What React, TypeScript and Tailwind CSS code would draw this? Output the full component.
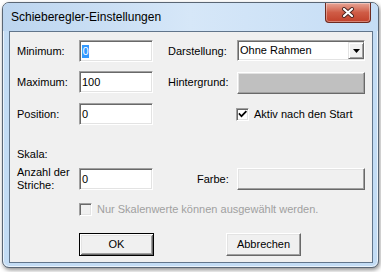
import React from "react";

const sunken =
  "border border-t-[#a0a0a0] border-l-[#a0a0a0] border-r-white border-b-white shadow-[inset_1px_1px_0_#696969,inset_-1px_-1px_0_#e3e3e3]";
const raised =
  "border border-t-white border-l-white border-r-[#696969] border-b-[#696969] shadow-[inset_-1px_-1px_0_#a0a0a0,inset_1px_1px_0_#e3e3e3]";

function Label({ children, w }: { children: React.ReactNode; w: string }) {
  return <div className={`${w} shrink-0 leading-[13px]`}>{children}</div>;
}

function Input({ children }: { children?: React.ReactNode }) {
  return (
    <div className={`w-[74px] h-[22px] shrink-0 bg-white ${sunken} flex items-center pl-[2px] leading-[13px]`}>
      {children}
    </div>
  );
}

function Check({ checked, disabled }: { checked?: boolean; disabled?: boolean }) {
  return (
    <div
      className={`w-[13px] h-[13px] shrink-0 ${sunken} ${disabled ? "bg-[#f0f0f0]" : "bg-white"} flex items-center justify-center`}
    >
      {checked && (
        <svg width="9" height="9" viewBox="0 0 9 9">
          <path d="M1.5 4 L3.5 6.2 L7.8 1.8" stroke="#000" strokeWidth="1.7" fill="none" strokeLinecap="square" />
        </svg>
      )}
    </div>
  );
}

export default function App() {
  return (
    <div className="w-[381px] h-[272px] bg-white pl-[2px] pt-[2px] overflow-hidden">
      <div className="relative w-[377px] h-[266px] rounded-[7px] border border-[#5a6674] bg-[#c3dcf4] shadow-[1px_2px_4px_rgba(0,0,0,0.45),inset_0_0_0_1px_rgba(255,255,255,0.65)] flex flex-col">
        {/* title bar */}
        <div className="h-[28px] shrink-0 rounded-t-[6px] bg-gradient-to-r from-[#bcd5ef] via-[#d6e7f8] to-[#c5ddf5] pl-[8px] pt-[6px]">
          <div
            className="text-[12px] leading-[16px] text-black"
            style={{ fontFamily: '"Liberation Sans", Arial, sans-serif' }}
          >
            Schieberegler-Einstellungen
          </div>
        </div>
        {/* close button */}
        <div className="absolute left-[322px] top-0 w-[46px] h-[20px] rounded-b-[4px] border border-t-0 border-[#6e2a1f] bg-gradient-to-b from-[#e7a596] via-[#cf5c46] to-[#c1402a] shadow-[inset_0_0_0_1px_rgba(255,255,255,0.35)] flex items-center justify-center">
          <svg width="14" height="11" viewBox="0 0 14 11">
            <path d="M3 2 L11 9 M11 2 L3 9" stroke="#4a2520" strokeWidth="4" strokeLinecap="round" fill="none" />
            <path d="M3 2 L11 9 M11 2 L3 9" stroke="#ffffff" strokeWidth="2.2" strokeLinecap="round" fill="none" />
          </svg>
        </div>

        {/* client area */}
        <div
          className="ml-[6px] w-[364px] h-[232px] border border-[#61758b] bg-[#f0f0f0] pl-[7px] pt-[8px] text-[11px] text-black flex flex-col"
          style={{ fontFamily: '"Liberation Sans", Arial, sans-serif' }}
        >
          {/* row 1 */}
          <div className="flex items-center h-[22px]">
            <Label w="w-[62px]">Minimum:</Label>
            <Input>
              <span className="inline-block h-[13px] leading-[13px] px-[0.5px] bg-[#3399ff] text-white">0</span>
            </Input>
            <div className="w-[15px] shrink-0" />
            <Label w="w-[69px]">Darstellung:</Label>
            <div className={`w-[128px] h-[21px] self-start bg-white ${sunken} flex items-center`}>
              <div className="flex-1 pl-[2px] leading-[13px]">Ohne Rahmen</div>
              <div className="w-[16px] h-[17px] bg-[#f0f0f0] border border-t-[#e3e3e3] border-l-[#e3e3e3] border-r-[#696969] border-b-[#696969] shadow-[inset_1px_1px_0_#fff,inset_-1px_-1px_0_#a0a0a0] flex items-center justify-center">
                <svg width="7" height="4" viewBox="0 0 7 4">
                  <path d="M0 0 H7 L3.5 4 Z" fill="#000" />
                </svg>
              </div>
            </div>
          </div>

          {/* row 2 */}
          <div className="flex items-center h-[22px] mt-[9px]">
            <Label w="w-[62px]">Maximum:</Label>
            <Input>100</Input>
            <div className="w-[15px] shrink-0" />
            <Label w="w-[69px]">Hintergrund:</Label>
            <div className={`w-[128px] h-[22px] self-start mt-[1px] bg-[#c0c0c0] ${raised}`} />
          </div>

          {/* row 3 */}
          <div className="flex items-center h-[22px] mt-[10px]">
            <Label w="w-[62px]">Position:</Label>
            <Input>0</Input>
            <div className="w-[15px] shrink-0" />
            <div className="w-[68px] shrink-0" />
            <Check checked />
            <div className="ml-[5px] leading-[13px]">Aktiv nach den Start</div>
          </div>

          {/* Skala */}
          <div className="mt-[23px] leading-[13px]">Skala:</div>

          {/* row 5 */}
          <div className="flex items-center h-[22px] mt-[7px]">
            <Label w="w-[62px]">
              Anzahl der
              <br />
              Striche:
            </Label>
            <Input>0</Input>
            <div className="w-[44px] shrink-0" />
            <Label w="w-[40px]">Farbe:</Label>
            <div className={`w-[128px] h-[22px] bg-[#f0f0f0] ${raised}`} />
          </div>

          {/* disabled checkbox */}
          <div className="flex items-center h-[13px] mt-[13px] ml-[62px]">
            <Check disabled />
            <div className="ml-[5px] leading-[13px] text-[#a0a0a0]">Nur Skalenwerte können ausgewählt werden.</div>
          </div>

          {/* buttons */}
          <div className="flex mt-[17px] ml-[62px]">
            <div className="w-[75px] h-[23px] border border-black bg-[#f0f0f0] shadow-[inset_1px_1px_0_#fff,inset_-1px_-1px_0_#696969,inset_2px_2px_0_#e3e3e3,inset_-2px_-2px_0_#a0a0a0] flex items-center justify-center leading-[13px]">
              OK
            </div>
            <div className={`ml-[72px] w-[75px] h-[23px] bg-[#f0f0f0] ${raised} flex items-center justify-center leading-[13px]`}>
              Abbrechen
            </div>
          </div>
        </div>
      </div>
    </div>
  );
}
